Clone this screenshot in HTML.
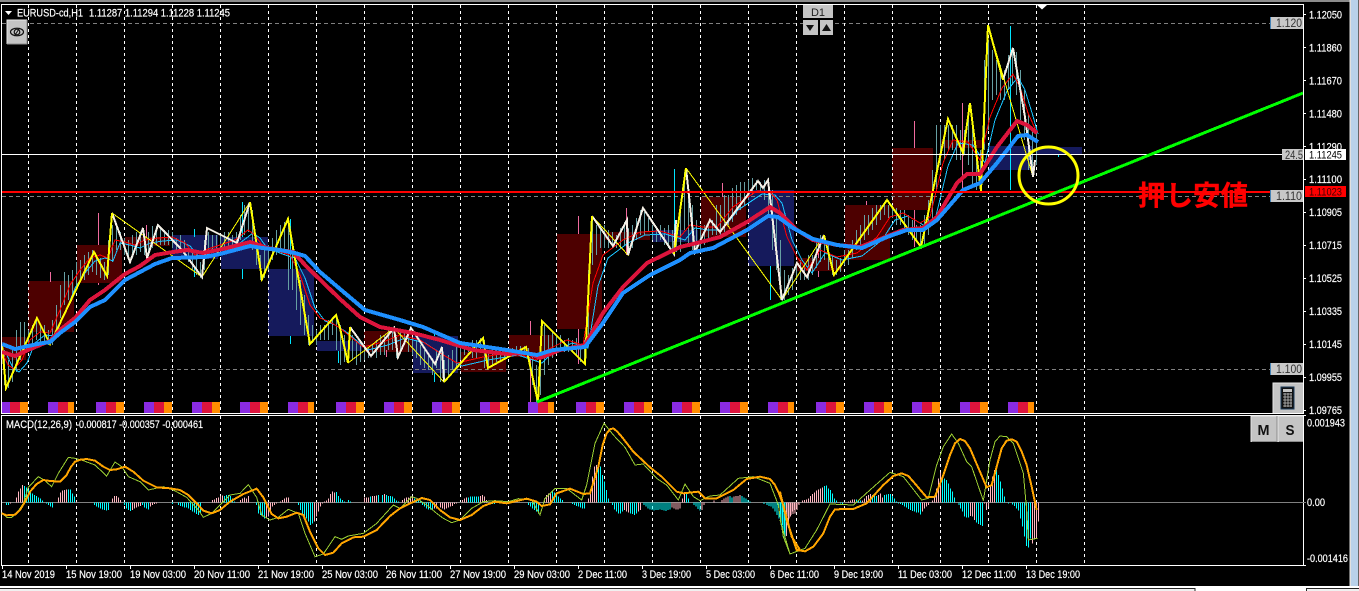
<!DOCTYPE html>
<html lang="ja"><head><meta charset="utf-8"><title>EURUSD</title>
<style>
html,body{margin:0;padding:0;background:#000;overflow:hidden}
svg{display:block}
text{font-family:"Liberation Sans","Noto Sans CJK JP",sans-serif}
polyline,line,.h{shape-rendering:crispEdges}
.t{stroke:#fff;stroke-width:.2}
</style></head><body>
<svg xmlns="http://www.w3.org/2000/svg" width="1359" height="591" viewBox="0 0 1359 591">
<rect width="1359" height="591" fill="#000"/>
<rect width="1350" height="2" fill="#8c8c8c"/>
<rect x="1349.5" y="0" width="1.5" height="586" fill="#e0e0e0"/>
<rect x="1351" y="0" width="7" height="586" fill="#b9d1ea"/>
<rect x="1358" y="0" width="1" height="586" fill="#666"/>
<rect x="0" y="586" width="1359" height="5" fill="#fff"/>
<rect x="-2" y="588.5" width="1197" height="5" fill="#f0f0f0" stroke="#222"/>
<rect x="1306.5" y="588.5" width="60" height="5" fill="#f0f0f0" stroke="#222"/>

<!-- D1 blocks -->
<g fill="#4d0000">
<rect x="2" y="337" width="24" height="23"/><rect x="28" y="281" width="46" height="51"/><rect x="77" y="245" width="45" height="38"/><rect x="125" y="237" width="45" height="9"/><rect x="364" y="331" width="48" height="21"/><rect x="461" y="352" width="45" height="20"/><rect x="509" y="335" width="45" height="22"/><rect x="557" y="234" width="45" height="95"/><rect x="605" y="232" width="45" height="8"/><rect x="701" y="197" width="45" height="40"/><rect x="797" y="258" width="45" height="13"/><rect x="845" y="205" width="45" height="55"/><rect x="892" y="148" width="41" height="62"/><rect x="941" y="140" width="41" height="8"/>
</g>
<g fill="#151a5c">
<rect x="172" y="235" width="46" height="24"/><rect x="221" y="237" width="47" height="32"/><rect x="268" y="269" width="46" height="67"/><rect x="317" y="341" width="45" height="10"/><rect x="413" y="336" width="45" height="37"/><rect x="653" y="230" width="45" height="12"/><rect x="748" y="190" width="46" height="76"/><rect x="989" y="146" width="44" height="24"/><rect x="1037" y="147" width="45" height="7"/>
</g>

<!-- grid -->
<path d="M2 23.5H1270M2 196.5H1270M2 369.5H1270" stroke="#808080" stroke-width="1" stroke-dasharray="4 3" fill="none"/>
<path d="M28.5 5V413M76.5 5V413M124.5 5V413M172.5 5V413M220.5 5V413M268.5 5V413M316.5 5V413M364.5 5V413M412.5 5V413M460.5 5V413M508.5 5V413M556.5 5V413M604.5 5V413M652.5 5V413M700.5 5V413M748.5 5V413M796.5 5V413M844.5 5V413M892.5 5V413M940.5 5V413M988.5 5V413M1036.5 5V413M1084.5 5V413M28.5 416V565M76.5 416V565M124.5 416V565M172.5 416V565M220.5 416V565M268.5 416V565M316.5 416V565M364.5 416V565M412.5 416V565M460.5 416V565M508.5 416V565M556.5 416V565M604.5 416V565M652.5 416V565M700.5 416V565M748.5 416V565M796.5 416V565M844.5 416V565M892.5 416V565M940.5 416V565M988.5 416V565M1036.5 416V565M1084.5 416V565" stroke="#fff" stroke-dasharray="3 3" fill="none"/>

<!-- wicks -->
<path d="M50.5 272V282M98.5 213V245M98.5 283V285M146.5 225V237M146.5 257V261M386.5 350V357M530.5 321V335M530.5 358V402M578.5 216V234M578.5 329V364M626.5 208V232M626.5 240V255M722.5 183V197M818.5 244V258M818.5 271V277M866.5 201V205M914.5 210V247M914.5 121V148M962.5 103V190" stroke="#f06a9e" fill="none"/>
<path d="M194.5 229V237M194.5 268V277M242.5 202V237M242.5 269V279M290.5 219V269M290.5 336V344M338.5 351V363M434.5 330V336M434.5 373V382M674.5 169V232M674.5 239V254M770.5 266V300M1010.5 26V190M1058.5 154V157" stroke="#00e5ff" fill="none"/>

<!-- bars -->
<path stroke="#669fa3" fill="none" d="M4.5 350V385M8.5 360V388M12.5 350V382M16.5 330V372M20.5 322V360M24.5 322V350M28.5 330V345M32.5 325V345M36.5 318V340M40.5 325V345M44.5 325V345M48.5 330V345M52.5 320V345M56.5 305V335M60.5 285V318M64.5 272V305M68.5 275V300M72.5 270V295M76.5 262V285M80.5 260V280M84.5 255V280M88.5 252V275M92.5 250V272M96.5 258V275M100.5 258V278M104.5 262V280M108.5 240V275M112.5 225V262M116.5 225V250M120.5 232V250M124.5 238V255M128.5 240V260M132.5 235V258M136.5 232V255M140.5 232V252M144.5 235V255M148.5 232V255M152.5 226V248M156.5 226V245M160.5 228V245M164.5 230V245M168.5 230V245M172.5 232V248M176.5 238V250M180.5 235V252M184.5 240V255M188.5 248V262M192.5 250V270M196.5 255V275M200.5 262V278M204.5 240V270M208.5 232V255M212.5 235V250M216.5 235V250M220.5 235V248M224.5 232V250M228.5 232V248M232.5 235V250M236.5 232V245M240.5 215V240M244.5 205V235M248.5 203V232M252.5 210V250M256.5 240V265M260.5 255V280M264.5 250V278M268.5 245V270M272.5 238V260M276.5 230V255M280.5 225V250M284.5 222V255M288.5 222V290M292.5 240V290M296.5 260V310M300.5 280V325M304.5 295V335M308.5 315V345M312.5 325V343M316.5 330V345M320.5 325V340M324.5 325V340M328.5 320V340M332.5 318V335M336.5 318V350M340.5 325V365M344.5 335V362M348.5 340V362M352.5 335V360M356.5 340V365M360.5 345V362M364.5 345V360M368.5 348V358M372.5 345V355M376.5 340V358M380.5 335V355M384.5 335V355M388.5 330V350M392.5 328V350M396.5 335V358M400.5 332V352M404.5 330V345M408.5 332V352M412.5 338V355M416.5 340V358M420.5 345V365M424.5 350V368M428.5 355V370M432.5 358V375M436.5 350V368M440.5 355V382M444.5 360V382M448.5 355V375M452.5 350V370M456.5 345V368M460.5 345V360M464.5 345V355M468.5 345V352M472.5 340V358M476.5 340V358M480.5 338V352M484.5 340V368M488.5 350V368M492.5 348V365M496.5 350V362M500.5 348V360M504.5 348V358M508.5 350V356M512.5 348V354M516.5 346V352M520.5 346V352M524.5 346V352M528.5 348V360M532.5 355V385M536.5 365V402M540.5 340V395M544.5 325V375M548.5 335V365M552.5 332V358M556.5 335V352M560.5 335V350M564.5 340V352M568.5 338V352M572.5 340V352M576.5 338V355M580.5 345V362M584.5 340V362M588.5 270V340M592.5 218V265M596.5 225V255M600.5 225V248M604.5 225V248M608.5 230V248M612.5 232V248M616.5 235V248M620.5 228V248M624.5 222V245M628.5 228V255M632.5 225V248M636.5 218V240M640.5 210V235M644.5 212V235M648.5 218V232M652.5 225V240M656.5 228V242M660.5 225V240M664.5 228V245M668.5 225V248M672.5 230V252M676.5 225V252M680.5 205V252M684.5 172V230M688.5 185V245M692.5 205V250M696.5 220V250M700.5 225V250M704.5 225V245M708.5 222V238M712.5 220V235M716.5 205V235M720.5 205V235M724.5 195V232M728.5 195V225M732.5 188V222M736.5 185V215M740.5 182V210M744.5 182V205M748.5 180V200M752.5 178V195M756.5 180V190M760.5 182V192M764.5 180V200M768.5 180V215M772.5 190V250M776.5 215V270M780.5 240V300M784.5 270V300M788.5 275V295M792.5 268V290M796.5 265V280M800.5 260V280M804.5 265V280M808.5 255V280M812.5 255V275M816.5 240V268M820.5 235V262M824.5 240V260M828.5 245V270M832.5 255V275M836.5 260V275M840.5 258V272M844.5 250V265M848.5 250V265M852.5 240V258M856.5 230V250M860.5 225V245M864.5 215V240M868.5 215V235M872.5 208V230M876.5 205V225M880.5 205V220M884.5 202V215M888.5 205V218M892.5 205V218M896.5 208V225M900.5 210V225M904.5 210V230M908.5 215V235M912.5 220V240M916.5 225V240M920.5 225V248M924.5 215V245M928.5 200V235M932.5 170V220M936.5 125V190M940.5 125V165M944.5 125V160M948.5 125V150M952.5 125V150M956.5 125V160M960.5 130V160M964.5 130V155M968.5 105V165M972.5 120V185M976.5 155V190M980.5 150V190M984.5 60V150M988.5 40V130M992.5 50V100M996.5 60V95M1000.5 65V100M1004.5 70V100M1008.5 55V90M1012.5 48V85M1016.5 52V95M1020.5 70V120M1024.5 90V140M1028.5 115V170M1032.5 130V175M1036.5 130V165"/>

<!-- bottom colored squares -->
<path fill="#8a2be2" d="M2 402h8v11h-8zM48 402h10v11h-10zM96 402h10v11h-10zM144 402h10v11h-10zM192 402h10v11h-10zM240 402h10v11h-10zM288 402h10v11h-10zM336 402h10v11h-10zM384 402h10v11h-10zM432 402h10v11h-10zM480 402h10v11h-10zM528 402h10v11h-10zM576 402h10v11h-10zM624 402h10v11h-10zM672 402h10v11h-10zM720 402h10v11h-10zM768 402h10v11h-10zM816 402h10v11h-10zM864 402h10v11h-10zM912 402h10v11h-10zM960 402h10v11h-10zM1008 402h10v11h-10z"/>
<path fill="#dc143c" d="M10 402h10v11h-10zM58 402h10v11h-10zM106 402h10v11h-10zM154 402h10v11h-10zM202 402h10v11h-10zM250 402h10v11h-10zM298 402h10v11h-10zM346 402h10v11h-10zM394 402h10v11h-10zM442 402h10v11h-10zM490 402h10v11h-10zM538 402h10v11h-10zM586 402h10v11h-10zM634 402h10v11h-10zM682 402h10v11h-10zM730 402h10v11h-10zM778 402h10v11h-10zM826 402h10v11h-10zM874 402h10v11h-10zM922 402h10v11h-10zM970 402h10v11h-10zM1018 402h10v11h-10z"/>
<path fill="#ff8c00" d="M20 402h8v11h-8zM68 402h6v11h-6zM116 402h8v11h-8zM164 402h8v11h-8zM212 402h8v11h-8zM260 402h8v11h-8zM308 402h6v11h-6zM356 402h8v11h-8zM404 402h8v11h-8zM452 402h8v11h-8zM500 402h8v11h-8zM548 402h6v11h-6zM596 402h8v11h-8zM644 402h8v11h-8zM692 402h8v11h-8zM740 402h8v11h-8zM788 402h6v11h-6zM836 402h8v11h-8zM884 402h8v11h-8zM932 402h8v11h-8zM980 402h8v11h-8zM1028 402h6v11h-6z"/>

<!-- thin MAs -->
<polyline fill="none" stroke="#19c3ff" stroke-width="1" transform="translate(5,3)" points="2,352 8,365 14,369 22,360 30,340 40,332 50,333 60,310 70,285 80,270 90,258 100,255 108,258 115,240 125,242 135,245 145,240 158,238 172,237 185,243 195,255 205,250 220,245 235,240 248,230 255,235 262,245 280,252 290,255 300,275 310,305 320,318 330,322 340,328 363,347 383,342 400,335 420,340 440,353 457,363 483,357 513,352 537,360 547,350 567,340 583,345 593,283 603,255 623,240 640,232 660,231 680,237 690,225 703,227 717,227 733,207 757,191 770,192 777,200 787,237 797,257 807,270 820,250 837,257 857,253 877,237 890,217 903,213 920,223 930,217 943,163 953,140 968,142 980,160 990,117 1002,88 1013,74 1020,87 1028,113 1033,131"/>
<polyline fill="none" stroke="#ff0000" stroke-width="1" points="2,352 8,365 14,369 22,360 30,340 40,332 50,333 60,310 70,285 80,270 90,258 100,255 108,258 115,240 125,242 135,245 145,240 158,238 172,237 185,243 195,255 205,250 220,245 235,240 248,230 255,235 262,245 280,252 290,255 300,275 310,305 320,318 330,322 340,328 363,347 383,342 400,335 420,340 440,353 457,363 483,357 513,352 537,360 547,350 567,340 583,345 593,283 603,255 623,240 640,232 660,231 680,237 690,225 703,227 717,227 733,207 757,191 770,192 777,200 787,237 797,257 807,270 820,250 837,257 857,253 877,237 890,217 903,213 920,223 930,217 943,163 953,140 968,142 980,160 990,117 1002,88 1013,74 1020,87 1028,113 1037,133"/>

<!-- thin yellow zig -->
<g fill="none" stroke="#ffff00" stroke-width="1">
<polyline points="112,213 202,277 250,202"/>
<polyline points="348,363 394,328 444,382 483,338"/>
<polyline points="592,216 628,255 643,208 674,254"/>
<polyline points="686,168 782,300 824,235"/>
<polyline points="988,25 1033,177"/>
</g>
<!-- bold zigzag -->
<g fill="none" stroke-width="2" stroke-linejoin="miter">
<g stroke="#f5f0e6">
<polyline points="112,213 130,262 143,228 147,258 158,225 182,250 202,277 207,228 237,243 250,202"/>
<polyline points="350,327 371,356 394,328 398,357 411,328 435,364 442,347 444,382"/>
<polyline points="592,216 613,246 627,220 628,255 643,208 674,254 676,220"/>
<polyline points="686,168 695,252 710,220 720,232 758,181 763,188 768,180 782,300 797,263 807,277 824,235"/>
<polyline points="1003,80 1013,48 1025,117 1033,177 1035,160"/>
</g>
<g stroke="#ffff00">
<polyline points="2,345 6,388 37,318 50,344 94,252 107,276 112,213"/>
<polyline points="250,202 262,279 288,219 310,344 336,315 340,328 348,363 350,327"/>
<polyline points="444,382 483,338 488,368 526,347 538,402 542,321 585,364 592,216"/>
<polyline points="674,254 686,168"/>
<polyline points="824,235 834,275 887,200 921,247 948,119 963,153 970,103 981,191 988,25 1003,80"/>
</g>
</g>
<!-- thick MAs -->
<polyline fill="none" stroke="#dc143c" stroke-width="4" stroke-linejoin="round" points="2,352 15,356 28,350 40,345 50,341 60,330 75,318 90,300 105,290 115,282 125,274 140,266 155,255 173,252 187,250 203,253 227,248 250,242 267,248 293,252 307,267 340,299 360,317 380,327 413,333 440,340 473,350 507,354 527,353 540,358 560,350 585,345 603,313 623,287 647,263 680,247 697,243 720,237 747,222 770,207 780,213 797,230 813,240 837,245 860,247 883,238 903,230 923,228 937,217 957,183 967,174 980,174 997,147 1017,121 1027,125 1037,133"/>
<polyline fill="none" stroke="#1e90ff" stroke-width="4" stroke-linejoin="round" points="2,344 15,349 28,346 40,343.5 50,342 60,333 75,322 90,307 105,300 115,290 125,280 140,272 155,264 172,258 190,257.5 205,257 220,254 235,250 250,246 262,248 280,250 295,253 305,256 320,272 340,289 365,310 400,320 423,327 460,343 507,350 537,355 553,350 585,347 603,323 623,293 650,275 680,260 690,253 713,248 747,230 768,216 778,217 793,228 813,239 837,245 862,248 887,237 907,230 923,230 937,220 963,190 980,183 997,163 1018,136 1027,135 1038,142"/>

<!-- horizontal lines -->
<rect x="2" y="154" width="1301" height="1" fill="#fff"/>
<rect x="2" y="191" width="1301" height="2" fill="#ff0000"/>
<!-- green trend -->
<line x1="537" y1="402" x2="1303" y2="93" stroke="#00ff00" stroke-width="3"/>
<!-- yellow circle -->
<ellipse cx="1048.5" cy="175.5" rx="29.5" ry="28.5" fill="none" stroke="#ffff00" stroke-width="3"/>
<!-- annotation -->
<text x="1138" y="205" font-size="27.5" font-weight="700" fill="#ff0000" stroke="#ff0000" stroke-width=".4" style="font-family:'Noto Sans CJK JP','Liberation Sans',sans-serif">押し安値</text>

<!-- frames -->
<path d="M1.5 4.5H1303.5V413.5H1.5ZM1.5 415.5H1303.5V565.5H1.5Z" fill="none" stroke="#fff"/>
<path d="M1303 14.5h3M1303 47.5h3M1303 80.5h3M1303 113.5h3M1303 146.5h3M1303 179.5h3M1303 212.5h3M1303 245.5h3M1303 278.5h3M1303 311.5h3M1303 344.5h3M1303 377.5h3M1303 410.5h3M1303 415.5h3M1303 565.5h3" stroke="#fff"/>
<path d="M2.5 565v4M66.5 565v4M130.5 565v4M194.5 565v4M258.5 565v4M322.5 565v4M386.5 565v4M450.5 565v4M514.5 565v4M578.5 565v4M642.5 565v4M706.5 565v4M770.5 565v4M834.5 565v4M898.5 565v4M962.5 565v4M1026.5 565v4" stroke="#fff"/>
<rect x="2" y="502" width="1304" height="1" fill="#808080"/>

<!-- MACD histogram -->
<g class="h" transform="translate(.5,410) scale(.33333)" fill="none" stroke-width="3">
<path stroke="#ffb6c1" d="M24 277V280M30 277V280M48 277V262M54 277V245M60 277V235M66 277V225M174 277V262M180 277V248M186 277V242M192 277V240M198 277V238M228 277V275M336 277V265M342 277V258M348 277V258M354 277V262M360 277V270M396 277V300M402 277V295M408 277V292M414 277V290M420 277V288M450 277V290M456 277V285M462 277V282M468 277V280M636 277V270M642 277V268M648 277V264M654 277V262M660 277V258M666 277V256M720 277V270M726 277V265M732 277V262M738 277V265M744 277V258M798 277V325M804 277V320M810 277V300M816 277V290M822 277V285M828 277V280M840 277V275M846 277V270M852 277V265M858 277V263M864 277V262M942 277V335M948 277V320M954 277V305M960 277V290M966 277V280M972 277V275M978 277V272M984 277V265M990 277V252M996 277V245M1002 277V248M1092 277V262M1098 277V262M1104 277V262M1116 277V258M1122 277V258M1128 277V256M1152 277V252"/>
<path stroke="#00ffff" d="M18 277V285M24 277V285M72 277V228M78 277V232M84 277V238M90 277V243M96 277V250M102 277V255M108 277V258M114 277V262M120 277V265M126 277V272M138 277V280M144 277V285M150 277V290M156 277V292M204 277V238M210 277V238M216 277V250M222 277V260M282 277V285M288 277V290M294 277V293M300 277V295M306 277V298M312 277V300M318 277V302M324 277V300M372 277V285M378 277V295M384 277V300M390 277V303M426 277V285M432 277V292M438 277V295M444 277V298M516 277V282M534 277V285M540 277V288M546 277V290M552 277V292M558 277V292M564 277V295M570 277V300M576 277V305M582 277V308M588 277V312M594 277V315M600 277V307M672 277V258M678 277V255M684 277V255M690 277V258M696 277V265M702 277V275M768 277V285M774 277V310M780 277V315M786 277V320M792 277V325M894 277V285M900 277V300M906 277V310M912 277V320M918 277V325M924 277V335M930 277V345M936 277V340M1008 277V246M1014 277V258M1020 277V265M1026 277V270M1032 277V275M1044 277V270M1050 277V275M1110 277V260M1134 277V255M1146 277V255M1158 277V255M1164 277V258M1170 277V258M1176 277V260M1182 277V265M1188 277V272M1194 277V275"/>
</g>
<g class="h" transform="translate(400.5,410) scale(.33333)" fill="none" stroke-width="3">
<path stroke="#ffb6c1" d="M6 277V270M12 277V265M18 277V262M24 277V262M30 277V260M36 277V260M102 277V295M108 277V295M120 277V292M126 277V295M132 277V298M138 277V295M144 277V292M150 277V290M156 277V288M162 277V282M168 277V280M186 277V270M192 277V265M198 277V262M240 277V258M246 277V255M252 277V260M258 277V270M432 277V265M438 277V255M444 277V250M450 277V248M564 277V265M570 277V240M576 277V200M582 277V170M588 277V165M672 277V300M678 277V305M684 277V307M714 277V305M720 277V300M814 277V292M820 277V295M826 277V298M832 277V298M838 277V295M846 277V265M852 277V250M904 277V300M910 277V285M940 277V272M964 277V270M970 277V265M976 277V262M982 277V260M1000 277V260M1006 277V258M1012 277V258M1018 277V255M1160 277V345M1166 277V325M1172 277V315M1178 277V312M1184 277V310M1190 277V300M1196 277V285"/>
<path stroke="#00ffff" d="M42 277V265M48 277V268M54 277V268M60 277V275M66 277V285M72 277V290M78 277V295M84 277V298M90 277V298M96 277V298M204 277V262M210 277V260M216 277V260M222 277V260M228 277V260M234 277V260M276 277V282M282 277V282M336 277V272M384 277V285M390 277V290M396 277V295M402 277V300M408 277V305M414 277V310M456 277V245M462 277V248M468 277V255M474 277V260M480 277V265M486 277V270M516 277V282M522 277V285M528 277V288M534 277V290M540 277V293M546 277V295M552 277V295M594 277V170M600 277V170M606 277V195M612 277V215M618 277V240M624 277V265M636 277V285M642 277V298M648 277V305M654 277V310M660 277V310M666 277V305M690 277V310M696 277V312M702 277V315M708 277V310M730 277V285M736 277V290M742 277V295M748 277V298M754 277V300M760 277V302M766 277V300M772 277V300M778 277V298M784 277V300M790 277V302M796 277V303M802 277V300M808 277V298M858 277V250M864 277V265M880 277V285M886 277V290M892 277V297M898 277V302M988 277V258M994 277V262M1024 277V258M1030 277V262M1036 277V265M1042 277V270M1048 277V275M1090 277V282M1100 277V285M1106 277V288M1112 277V290M1118 277V295M1124 277V305M1130 277V315M1136 277V325M1142 277V345M1148 277V380M1154 277V385"/>
</g>
<g class="h" transform="translate(780.5,410) scale(.33333)" fill="none" stroke-width="3">
<path stroke="#ffb6c1" d="M18 277V378M24 277V345M30 277V320M36 277V305M42 277V300M48 277V295M54 277V280M66 277V272M72 277V270M78 277V268M84 277V265M90 277V258M96 277V252M102 277V248M108 277V242M114 277V238M120 277V235M126 277V232M192 277V278M198 277V278M204 277V275M210 277V272M216 277V268M222 277V268M246 277V272M252 277V265M258 277V258M264 277V255M270 277V252M294 277V255M300 277V250M306 277V262M426 277V305M432 277V295M438 277V290M444 277V285M450 277V278M456 277V272M462 277V262M468 277V235M474 277V205M480 277V188M570 277V318M576 277V320M582 277V330M612 277V280M618 277V300M624 277V290M630 277V225M636 277V200M642 277V180M756 277V400M762 277V385M768 277V385M774 277V335"/>
<path stroke="#00ffff" d="M0 277V330M6 277V345M12 277V380M132 277V228M138 277V226M144 277V235M150 277V240M156 277V250M162 277V265M168 277V272M174 277V278M180 277V280M186 277V282M228 277V268M234 277V270M240 277V272M276 277V255M282 277V255M288 277V258M312 277V255M318 277V254M324 277V252M330 277V252M336 277V258M342 277V265M348 277V275M354 277V280M360 277V282M366 277V285M372 277V290M378 277V293M384 277V297M390 277V300M396 277V303M402 277V305M408 277V307M414 277V308M420 277V314M486 277V198M492 277V205M498 277V210M504 277V220M510 277V235M516 277V245M522 277V262M535 277V285M540 277V295M546 277V305M552 277V320M558 277V322M564 277V322M588 277V338M594 277V342M600 277V345M606 277V348M648 277V180M654 277V195M660 277V215M666 277V235M672 277V260M684 277V280M696 277V283M702 277V288M708 277V295M714 277V302M720 277V325M726 277V350M732 277V380M738 277V408M744 277V412M750 277V385"/>
</g>

<!-- MACD lines -->
<g fill="none">
<g transform="translate(0,410) scale(.33333)">
<polyline stroke="#9acd32" stroke-width="3" points="5,308 20,322 35,322 50,310 70,280 85,232 115,200 135,212 155,230 175,190 205,142 225,145 250,152 285,165 320,198 345,156 365,170 385,200 420,215 445,240 490,230 520,240 560,262 595,300 610,322 635,310 665,280 690,255 720,250 745,224 770,262 785,315 810,330 835,322 865,298 895,310 915,370 945,440 970,432 1005,380 1025,388 1045,378 1090,370 1130,340 1180,285 1200,295"/>
<polyline stroke="#ffa500" stroke-width="6" stroke-linejoin="round" points="5,310 20,316 45,314 60,300 75,275 90,245 110,222 130,210 150,213 180,215 200,195 212,172 225,155 242,149 260,147 285,152 310,170 330,180 350,178 375,170 400,185 430,212 470,232 510,235 540,240 565,255 590,280 610,302 635,310 660,300 690,275 730,252 770,236 790,262 815,312 835,325 860,320 890,308 910,315 930,365 955,415 975,435 1000,428 1025,400 1060,382 1090,380 1130,360 1170,318 1200,295"/>
</g>
<g transform="translate(400,410) scale(.33333)">
<polyline stroke="#9acd32" stroke-width="3" points="0,295 35,260 50,265 80,285 110,310 130,325 155,338 180,330 215,295 250,275 285,272 325,275 355,266 395,270 420,315 435,265 465,235 500,235 545,270 560,225 585,100 612,40 640,75 675,112 705,165 730,162 770,205 800,225 835,270 855,222 880,260 900,272 930,258 960,255 1015,205 1060,200 1110,220 1135,285 1150,380 1170,432 1200,420"/>
<polyline stroke="#ffa500" stroke-width="6" stroke-linejoin="round" points="0,295 35,278 65,264 90,270 120,300 150,322 180,330 215,315 250,288 285,275 320,280 380,266 410,275 425,288 450,283 470,250 510,236 550,252 570,250 595,170 608,105 620,70 630,58 640,55 652,65 665,80 700,125 750,172 785,200 830,245 850,250 895,245 915,265 950,265 1000,240 1040,207 1080,200 1110,207 1125,225 1135,245 1150,285 1175,380 1200,420"/>
</g>
<g transform="translate(780,410) scale(.33333)">
<polyline stroke="#9acd32" stroke-width="3" points="0,330 30,432 75,415 110,360 150,282 220,285 270,240 330,187 370,200 425,270 445,265 470,165 490,110 515,72 535,100 560,155 575,170 610,272 630,150 645,95 660,78 680,80 700,100 730,190 740,300 745,390 772,385"/>
<polyline stroke="#ffa500" stroke-width="6" stroke-linejoin="round" points="0,245 20,330 50,420 75,424 100,410 130,370 150,320 165,298 220,297 260,280 310,225 340,198 365,190 385,198 400,215 440,262 465,260 490,195 510,135 525,100 540,87 555,93 570,115 620,232 635,225 650,170 665,115 680,92 695,88 710,95 725,125 740,165 755,230 770,300"/>
</g>
</g>

<!-- Object labels -->
<g>
<rect x="1270" y="17" width="33" height="12" fill="#c8c8c8"/><rect x="1270" y="17" width="1" height="12" fill="#4682b4"/>
<text x="1276" y="27" font-size="12" textLength="26" lengthAdjust="spacingAndGlyphs" fill="#333">1.120</text>
<rect x="1270" y="190" width="33" height="12" fill="#c8c8c8"/><rect x="1270" y="190" width="1" height="12" fill="#4682b4"/>
<text x="1276" y="200" font-size="12" textLength="26" lengthAdjust="spacingAndGlyphs" fill="#333">1.110</text>
<rect x="1270" y="363" width="33" height="12" fill="#c8c8c8"/><rect x="1270" y="363" width="1" height="12" fill="#4682b4"/>
<text x="1276" y="373" font-size="12" textLength="26" lengthAdjust="spacingAndGlyphs" fill="#333">1.100</text>
<rect x="1282" y="149" width="21" height="11" fill="#c8c8c8"/>
<text x="1285" y="159" font-size="12" textLength="18" lengthAdjust="spacingAndGlyphs" fill="#333">24.5</text>
</g>

<!-- Price axis -->
<g font-size="11" fill="#fff" class="t">
<text x="1309" y="18.5" textLength="33" lengthAdjust="spacingAndGlyphs">1.12050</text>
<text x="1309" y="51.5" textLength="33" lengthAdjust="spacingAndGlyphs">1.11860</text>
<text x="1309" y="84.5" textLength="33" lengthAdjust="spacingAndGlyphs">1.11670</text>
<text x="1309" y="117.5" textLength="33" lengthAdjust="spacingAndGlyphs">1.11480</text>
<text x="1309" y="150.5" textLength="33" lengthAdjust="spacingAndGlyphs">1.11290</text>
<text x="1309" y="183" textLength="33" lengthAdjust="spacingAndGlyphs">1.11100</text>
<text x="1309" y="216" textLength="33" lengthAdjust="spacingAndGlyphs">1.10905</text>
<text x="1309" y="249" textLength="33" lengthAdjust="spacingAndGlyphs">1.10715</text>
<text x="1309" y="282" textLength="33" lengthAdjust="spacingAndGlyphs">1.10525</text>
<text x="1309" y="315" textLength="33" lengthAdjust="spacingAndGlyphs">1.10335</text>
<text x="1309" y="348" textLength="33" lengthAdjust="spacingAndGlyphs">1.10145</text>
<text x="1309" y="381" textLength="33" lengthAdjust="spacingAndGlyphs">1.09955</text>
<text x="1309" y="414" textLength="33" lengthAdjust="spacingAndGlyphs">1.09765</text>
<text x="1307" y="426.5" textLength="38" lengthAdjust="spacingAndGlyphs">0.001943</text>
<text x="1307" y="506" textLength="18" lengthAdjust="spacingAndGlyphs">0.00</text>
<text x="1307" y="562" textLength="41" lengthAdjust="spacingAndGlyphs">-0.001416</text>
</g>
<rect x="1305" y="149" width="41" height="11" fill="#fff"/>
<text x="1309" y="158.5" font-size="11" fill="#000" textLength="33" lengthAdjust="spacingAndGlyphs">1.11245</text>
<rect x="1305" y="186" width="41" height="11" fill="#ff0000"/>
<text x="1309" y="195.5" font-size="11" fill="#400000" textLength="33" lengthAdjust="spacingAndGlyphs">1.11023</text>

<!-- Header -->
<path d="M5 11h7l-3.5 4z" fill="#fff"/>
<g class="t" font-size="11" fill="#fff">
<text x="17" y="16.5" textLength="66" lengthAdjust="spacingAndGlyphs">EURUSD-cd,H1</text>
<text x="89" y="16.5" textLength="141" lengthAdjust="spacingAndGlyphs">1.11287 1.11294 1.11228 1.11245</text>
<text x="6" y="428" textLength="66" lengthAdjust="spacingAndGlyphs">MACD(12,26,9)</text>
<text x="76" y="428" textLength="127" lengthAdjust="spacingAndGlyphs">-0.000817 -0.000357 -0.000461</text>
</g>
<path d="M1037 5h10l-5 4.5z" fill="#fff"/>

<!-- Time axis -->
<g font-size="11" fill="#fff" class="t">
<text x="2" y="578" textLength="53" lengthAdjust="spacingAndGlyphs">14 Nov 2019</text>
<text x="66" y="578" textLength="56" lengthAdjust="spacingAndGlyphs">15 Nov 19:00</text>
<text x="130" y="578" textLength="56" lengthAdjust="spacingAndGlyphs">19 Nov 03:00</text>
<text x="194" y="578" textLength="56" lengthAdjust="spacingAndGlyphs">20 Nov 11:00</text>
<text x="258" y="578" textLength="56" lengthAdjust="spacingAndGlyphs">21 Nov 19:00</text>
<text x="322" y="578" textLength="56" lengthAdjust="spacingAndGlyphs">25 Nov 03:00</text>
<text x="386" y="578" textLength="56" lengthAdjust="spacingAndGlyphs">26 Nov 11:00</text>
<text x="450" y="578" textLength="56" lengthAdjust="spacingAndGlyphs">27 Nov 19:00</text>
<text x="514" y="578" textLength="56" lengthAdjust="spacingAndGlyphs">29 Nov 03:00</text>
<text x="578" y="578" textLength="49" lengthAdjust="spacingAndGlyphs">2 Dec 11:00</text>
<text x="642" y="578" textLength="49" lengthAdjust="spacingAndGlyphs">3 Dec 19:00</text>
<text x="706" y="578" textLength="49" lengthAdjust="spacingAndGlyphs">5 Dec 03:00</text>
<text x="770" y="578" textLength="49" lengthAdjust="spacingAndGlyphs">6 Dec 11:00</text>
<text x="834" y="578" textLength="49" lengthAdjust="spacingAndGlyphs">9 Dec 19:00</text>
<text x="898" y="578" textLength="54" lengthAdjust="spacingAndGlyphs">11 Dec 03:00</text>
<text x="962" y="578" textLength="54" lengthAdjust="spacingAndGlyphs">12 Dec 11:00</text>
<text x="1026" y="578" textLength="54" lengthAdjust="spacingAndGlyphs">13 Dec 19:00</text>
</g>

<!-- Eye button -->
<rect x="7" y="20" width="20" height="24" fill="#c4c4c4"/>
<path d="M7 44V20H27" fill="none" stroke="#e6e6e6"/><path d="M27 20V44H7" fill="none" stroke="#8c8c8c"/>
<ellipse cx="17" cy="32" rx="6.5" ry="3.8" fill="none" stroke="#111" stroke-width="1.2"/>
<circle cx="17" cy="32" r="2.8" fill="none" stroke="#111" stroke-width="1.2"/>
<path d="M14.5 36 19.5 28" stroke="#111" stroke-width="1"/>

<!-- D1 buttons -->
<rect x="803" y="5" width="30" height="13" fill="#c4c4c4"/>
<text x="818" y="16" font-size="11" text-anchor="middle" fill="#222">D1</text>
<rect x="803" y="20" width="15" height="15" fill="#c4c4c4"/>
<rect x="820" y="20" width="13" height="15" fill="#c4c4c4"/>
<path d="M806 25h8l-4 6z" fill="#111"/><path d="M822 31h9l-4.5-7z" fill="#111"/>

<!-- Calculator -->
<rect x="1273" y="383" width="30" height="30" fill="#c4c4c4"/>
<path d="M1273 413V383H1303" fill="none" stroke="#e6e6e6"/>
<rect x="1281" y="387" width="13" height="22" fill="#111" stroke="#1a3a5a"/>
<rect x="1283" y="389" width="9" height="3" fill="#c4c4c4"/>
<path d="M1283 394h9M1283 397h9M1283 400h9M1283 403h9M1283 406h9M1285 393v14M1288 393v14M1291 393v14" stroke="#c4c4c4" stroke-width=".8"/>

<!-- M S -->
<rect x="1251" y="416" width="26" height="26" fill="#c4c4c4"/>
<rect x="1278" y="416" width="25" height="26" fill="#c4c4c4"/>
<path d="M1251 442V416H1277M1278 442V416H1303" fill="none" stroke="#e6e6e6"/>
<path d="M1252 441.5H1277V416M1279 441.5H1303" fill="none" stroke="#8c8c8c"/>
<text x="1263.5" y="435" font-size="15" font-weight="700" text-anchor="middle" fill="#111" textLength="12" lengthAdjust="spacingAndGlyphs">M</text>
<text x="1290" y="435" font-size="15" font-weight="700" text-anchor="middle" fill="#111" textLength="9" lengthAdjust="spacingAndGlyphs">S</text>
</svg>
</body></html>
